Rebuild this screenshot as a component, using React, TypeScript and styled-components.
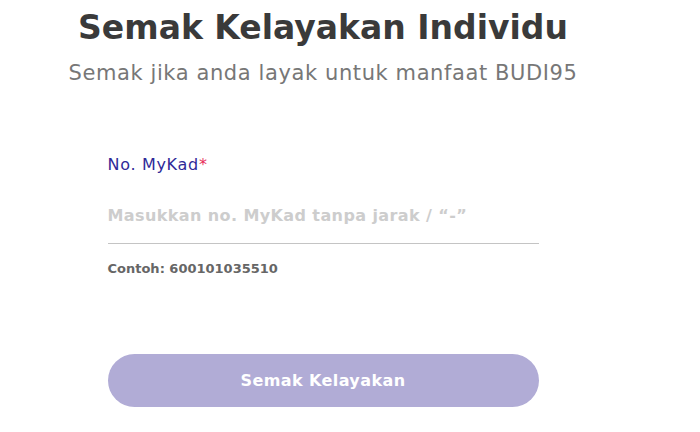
import React from "react"
import styled, { createGlobalStyle } from "styled-components"

const GlobalStyle = createGlobalStyle`
    html, body {
        margin: 0;
        padding: 0;
        background: #ffffff;
        font-family: "DejaVu Sans", "Noto Sans", sans-serif;
    }
    * {
        box-sizing: border-box;
    }
`

export default function App() {
    return (
        <>
            <GlobalStyle />
            <Page>
                <Header>
                    <Title>Semak Kelayakan Individu</Title>
                    <Subtitle>Semak jika anda layak untuk manfaat BUDI95</Subtitle>
                </Header>
                <Form onSubmit={e => e.preventDefault()}>
                    <Label htmlFor="mykad">
                        No. MyKad<Required>*</Required>
                    </Label>
                    <Input id="mykad" type="text" placeholder="Masukkan no. MyKad tanpa jarak / “-”" />
                    <Hint>Contoh: 600101035510</Hint>
                    <SubmitButton type="submit" disabled>Semak Kelayakan</SubmitButton>
                </Form>
            </Page>
        </>
    )
}

const Page = styled.div`
    width: 646px;
    height: 432px;
    display: flex;
    flex-direction: column;
    align-items: center;
    padding-top: 4px;
`

const Header = styled.div`
    display: flex;
    flex-direction: column;
    align-items: center;
`

const Title = styled.h1`
    margin: 0;
    font-size: 33px;
    line-height: 48px;
    font-weight: 700;
    color: #3a3a3a;
`

const Subtitle = styled.p`
    margin: 8px 0 0;
    font-size: 21px;
    line-height: 26px;
    font-weight: 400;
    color: #777777;
    letter-spacing: 0.6px;
`

const Form = styled.form`
    width: 431px;
    margin-top: 68px;
    display: flex;
    flex-direction: column;
`

const Label = styled.label`
    font-size: 16px;
    line-height: 22px;
    font-weight: 400;
    color: #2f2a98;
    letter-spacing: 0.7px;
`

const Required = styled.span`
    color: #e8305b;
`

const Input = styled.input`
    margin-top: 26px;
    width: 100%;
    border: none;
    border-bottom: 1px solid #c4c4c4;
    padding: 4px 0 18px;
    font-family: inherit;
    font-size: 16px;
    font-weight: 700;
    letter-spacing: 0.4px;
    color: #333333;
    outline: none;
    background: transparent;

    &::placeholder {
        color: #cdcdcd;
    }
`

const Hint = styled.span`
    margin-top: 15px;
    font-size: 13px;
    line-height: 20px;
    font-weight: 700;
    color: #666666;
`

const SubmitButton = styled.button`
    margin-top: 75px;
    width: 100%;
    height: 53px;
    border: none;
    border-radius: 27px;
    background: #b1acd6;
    color: #ffffff;
    font-family: inherit;
    font-size: 16px;
    font-weight: 700;
    letter-spacing: 0.4px;
    cursor: not-allowed;
`
